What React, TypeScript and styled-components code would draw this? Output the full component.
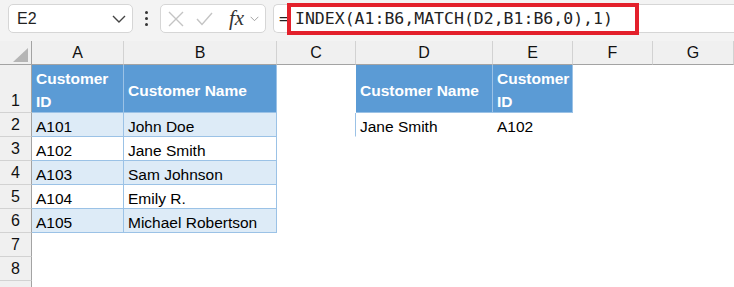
import styled, { createGlobalStyle } from 'styled-components';

const GlobalStyle = createGlobalStyle`
  html, body {
    margin: 0;
    padding: 0;
    background: #ffffff;
  }
  body {
    font-family: "Liberation Sans", Arial, sans-serif;
    color: #000;
  }
`;

const Page = styled.div`
  width: 734px;
  height: 287px;
  overflow: hidden;
  background: #fff;
`;

const FormulaBar = styled.div`
  height: 41px;
  display: flex;
  align-items: flex-start;
  padding: 4px 0 0 8px;
  box-sizing: border-box;
  background: #f3f3f3;
`;

const NameBox = styled.div`
  width: 125px;
  height: 29px;
  box-sizing: border-box;
  background: #fff;
  border: 1px solid #d6d6d6;
  border-radius: 5px;
  display: flex;
  align-items: center;
  justify-content: space-between;
  padding: 0 6px 0 8px;
  font-size: 16px;
  color: #222;
`;

const Dots = styled.div`
  width: 27px;
  height: 29px;
  display: flex;
  flex-direction: column;
  align-items: center;
  justify-content: center;
  gap: 3px;

  span {
    width: 3px;
    height: 3px;
    border-radius: 50%;
    background: #333;
  }
`;

const ActionBox = styled.div`
  width: 106px;
  height: 29px;
  box-sizing: border-box;
  background: #fff;
  border: 1px solid #d6d6d6;
  border-radius: 5px;
  display: flex;
  align-items: center;
  padding: 0 0 0 7px;
  gap: 12px;
`;

const Fx = styled.span`
  font-family: "Liberation Serif", "Times New Roman", serif;
  font-style: italic;
  font-size: 21px;
  color: #333;
  margin-left: 4px;
  margin-right: -6px;
`;

const FormulaBox = styled.div`
  flex: 1;
  height: 29px;
  margin-left: 7px;
  box-sizing: border-box;
  background: #fff;
  border: 1px solid #d6d6d6;
  border-right: none;
  border-radius: 5px 0 0 5px;
  display: flex;
  align-items: center;
  padding-left: 5px;
  font-family: "DejaVu Sans Mono", "Liberation Mono", monospace;
  font-size: 16.5px;
  color: #222;
`;

const Equals = styled.span`
  display: inline-block;
  width: 9px;
  overflow: hidden;
`;

const Highlight = styled.span`
  width: 352px;
  height: 32px;
  box-sizing: border-box;
  border: 4px solid #e3202b;
  display: flex;
  align-items: center;
  padding-left: 4px;
  margin-left: -1px;
`;

const Sheet = styled.div`
  display: grid;
  grid-template-columns: 32px 92px 153px 79px 137px 80px 80px 81px 1fr;
  grid-template-rows: 24px 48px repeat(8, 24px);
`;

const Corner = styled.div`
  background: #f0f0f0;
  border-right: 1px solid #a3a3a3;
  border-bottom: 1px solid #a3a3a3;
  box-sizing: border-box;
  display: flex;
  align-items: flex-end;
  justify-content: flex-end;
  padding: 0 3px 2px 0;
`;

const ColHead = styled.div`
  background: #f0f0f0;
  border-right: 1px solid #d2d2d2;
  border-bottom: 1px solid #a3a3a3;
  box-sizing: border-box;
  display: flex;
  align-items: center;
  justify-content: center;
  font-size: 16px;
  color: #111;
`;

const RowHead = styled.div`
  background: #f0f0f0;
  border-right: 1px solid #a3a3a3;
  border-bottom: 1px solid #d2d2d2;
  box-sizing: border-box;
  display: flex;
  align-items: flex-end;
  justify-content: center;
  padding-bottom: 1px;
  font-size: 16px;
  line-height: 20px;
  color: #111;
`;

type Kind = 'head' | 'band' | 'body' | 'plain' | 'empty';

const Cell = styled.div<{ $kind: Kind; $left?: boolean }>`
  box-sizing: border-box;
  display: flex;
  align-items: center;
  padding: 3px 4px 0 4px;
  font-size: 15.5px;
  line-height: 23px;
  overflow: hidden;
  white-space: ${(p) => (p.$kind === 'head' ? 'normal' : 'nowrap')};
  font-weight: ${(p) => (p.$kind === 'head' ? 700 : 400)};
  color: ${(p) => (p.$kind === 'head' ? '#fff' : '#000')};
  background: ${(p) =>
    p.$kind === 'head' ? '#5b9bd5' : p.$kind === 'band' ? '#ddebf7' : '#fff'};
  border-right: 1px solid
    ${(p) => (p.$kind === 'head' || p.$kind === 'band' || p.$kind === 'body' ? '#9bc2e6' : 'transparent')};
  border-bottom: 1px solid
    ${(p) => (p.$kind === 'head' || p.$kind === 'band' || p.$kind === 'body' ? '#9bc2e6' : 'transparent')};
  border-left: ${(p) => (p.$left ? '1px solid #9bc2e6' : 'none')};
  margin-left: ${(p) => (p.$left ? '-1px' : '0')};
`;

const Chevron = ({ w = 14, color = '#444' }: { w?: number; color?: string }) => (
  <svg width={w} height={w / 2 + 1} viewBox="0 0 14 8" fill="none">
    <polyline points="1,1 7,7 13,1" stroke={color} strokeWidth="1.4" />
  </svg>
);

const CancelIcon = () => (
  <svg width="16" height="16" viewBox="0 0 16 16" fill="none">
    <path d="M1 1 L15 15 M15 1 L1 15" stroke="#c4c4c4" strokeWidth="1.4" />
  </svg>
);

const EnterIcon = () => (
  <svg width="17" height="14" viewBox="0 0 17 14" fill="none">
    <polyline points="1,7 6,12.5 16,1" stroke="#c4c4c4" strokeWidth="1.4" />
  </svg>
);

const SelectAll = () => (
  <svg width="15" height="14" viewBox="0 0 15 14">
    <polygon points="15,0 15,14 0,14" fill="#b5b5b5" />
  </svg>
);

const columns = ['A', 'B', 'C', 'D', 'E', 'F', 'G', ''];

type Row = { a?: string; b?: string; d?: string; e?: string; kind: Kind; de?: Kind };

const rows: Row[] = [
  { a: 'Customer ID', b: 'Customer Name', d: 'Customer Name', e: 'Customer ID', kind: 'head', de: 'head' },
  { a: 'A101', b: 'John Doe', d: 'Jane Smith', e: 'A102', kind: 'band', de: 'plain' },
  { a: 'A102', b: 'Jane Smith', kind: 'body' },
  { a: 'A103', b: 'Sam Johnson', kind: 'band' },
  { a: 'A104', b: 'Emily R.', kind: 'body' },
  { a: 'A105', b: 'Michael Robertson', kind: 'band' },
  { kind: 'empty' },
  { kind: 'empty' },
  { kind: 'empty' },
];

export default function App() {
  return (
    <Page>
      <GlobalStyle />
      <FormulaBar>
        <NameBox>
          <span>E2</span>
          <Chevron />
        </NameBox>
        <Dots>
          <span />
          <span />
          <span />
        </Dots>
        <ActionBox>
          <CancelIcon />
          <EnterIcon />
          <Fx>fx</Fx>
          <Chevron w={9} color="#999" />
        </ActionBox>
        <FormulaBox>
          <Equals>=</Equals>
          <Highlight>INDEX(A1:B6,MATCH(D2,B1:B6,0),1)</Highlight>
        </FormulaBox>
      </FormulaBar>
      <Sheet>
        <Corner>
          <SelectAll />
        </Corner>
        {columns.map((c, i) => (
          <ColHead key={i}>{c}</ColHead>
        ))}
        {rows.map((r, i) => {
          const de = r.de ?? 'empty';
          // the ninth row is only a sliver at the bottom edge, so its number is not shown
          const label = i < 8 ? i + 1 : '';
          return [
            <RowHead key={`h${i}`}>{label}</RowHead>,
            <Cell key={`a${i}`} $kind={r.kind === 'empty' ? 'empty' : r.kind}>{r.a}</Cell>,
            <Cell key={`b${i}`} $kind={r.kind}>{r.b}</Cell>,
            <Cell key={`c${i}`} $kind="empty" />,
            <Cell key={`d${i}`} $kind={de === 'plain' ? 'empty' : de} $left={de === 'plain'}>{r.d}</Cell>,
            <Cell key={`e${i}`} $kind={de === 'plain' ? 'empty' : de}>{r.e}</Cell>,
            <Cell key={`f${i}`} $kind="empty" />,
            <Cell key={`g${i}`} $kind="empty" />,
            <Cell key={`x${i}`} $kind="empty" />,
          ];
        })}
      </Sheet>
    </Page>
  );
}
